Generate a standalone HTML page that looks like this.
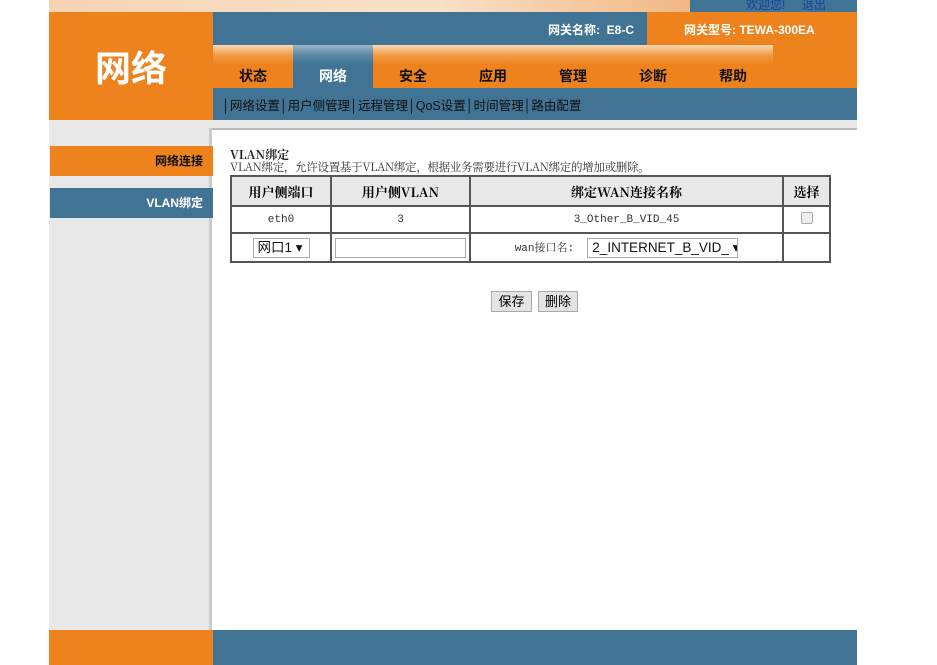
<!DOCTYPE html>
<html><head><meta charset="utf-8"><style>
*{margin:0;padding:0;box-sizing:border-box}
body{width:937px;height:665px;background:#fff;position:relative;overflow:hidden;font-family:"Liberation Sans","Noto Sans CJK SC",sans-serif;font-size:12px}
.a{position:absolute}
.or{background:#ee821c}
.bl{background:#417494}
.tab{position:absolute;top:45px;width:80px;height:43px;text-align:center;padding-top:21px;font-size:14px;font-weight:bold;color:#111;background:linear-gradient(#f9d9b3 0,#f29a45 10px,#ee821c 20px)}
.tab.on{background:linear-gradient(#9bb6c9 0,#5a87a5 10px,#417494 20px);color:#fff}
table{border-collapse:collapse;position:absolute;left:230px;top:175px;width:599px;table-layout:fixed}
td{border:2px solid #555;text-align:center;font-size:11px;font-family:"Liberation Mono","Noto Serif CJK SC",monospace;color:#333;white-space:nowrap;padding:0}
th{border:2px solid #555;background:#e8e8e8;font-size:13px;font-family:"Noto Serif CJK SC",serif;height:30px}
.btn{position:absolute;top:291px;height:21px;border:1px solid #aaa;background:#e4e4e4;font-size:13px;text-align:center;line-height:19px}
.sel{display:inline-block;vertical-align:middle;border:1px solid #aaa;background:#fff;font-size:13.5px;line-height:18px;height:20px;text-align:left;padding-left:4px;font-family:"Liberation Sans","Noto Sans CJK SC",sans-serif;color:#111;white-space:nowrap;overflow:hidden}
</style></head><body>
<div class="a" style="left:49px;top:0;width:641px;height:12px;background:linear-gradient(90deg,#f6d4b4,#f9e1c8 60%,#f2b884)"></div>
<div class="a bl" style="left:690px;top:0;width:167px;height:12px"></div>
<div class="a" style="left:746px;top:-4px;color:#1a3fa0;font-size:12px">欢迎您!&nbsp;&nbsp;&nbsp;&nbsp;&nbsp;退出</div>
<div class="a or" style="left:49px;top:12px;width:164px;height:108px"></div>
<div class="a" style="left:49px;top:40px;width:164px;text-align:center;color:#fff;font-size:36px;font-weight:bold">网络</div>
<div class="a bl" style="left:213px;top:12px;width:434px;height:33px"></div>
<div class="a or" style="left:647px;top:12px;width:210px;height:33px"></div>
<div class="a" style="left:548px;top:21px;color:#fff;font-weight:bold;font-size:12px">网关名称:&nbsp; E8-C</div>
<div class="a" style="left:684px;top:21px;color:#fff;font-weight:bold;font-size:12px">网关型号: TEWA-300EA</div>
<div class="a or" style="left:773px;top:45px;width:84px;height:43px"></div>
<div class="tab" style="left:213px">状态</div>
<div class="tab on" style="left:293px">网络</div>
<div class="tab" style="left:373px">安全</div>
<div class="tab" style="left:453px">应用</div>
<div class="tab" style="left:533px">管理</div>
<div class="tab" style="left:613px">诊断</div>
<div class="tab" style="left:693px">帮助</div>
<div class="a bl" style="left:213px;top:88px;width:644px;height:32px"></div>
<div class="a" style="left:222px;top:95px;color:#111;font-size:12.5px;white-space:nowrap">│网络设置│用户侧管理│远程管理│QoS设置│时间管理│路由配置</div>
<div class="a" style="left:49px;top:120px;width:808px;height:10px;background:#e8e8e8"></div>
<div class="a" style="left:209px;top:128px;width:648px;height:2px;background:#bbb"></div>
<div class="a" style="left:49px;top:120px;width:160px;height:510px;background:#e8e8e8"></div>
<div class="a" style="left:209px;top:128px;width:3px;height:502px;background:#ccc"></div>
<div class="a or" style="left:50px;top:146px;width:163px;height:30px;text-align:right;padding:6px 10px 0 0;font-weight:bold;color:#111">网络连接</div>
<div class="a bl" style="left:50px;top:188px;width:163px;height:30px;text-align:right;padding:6px 10px 0 0;font-weight:bold;color:#fff">VLAN绑定</div>
<div class="a" style="left:230px;top:146px;font-size:12px;font-weight:bold;font-family:'Noto Serif CJK SC',serif;color:#222">VLAN绑定</div>
<div class="a" style="left:230px;top:159px;font-size:11.5px;font-family:'Noto Serif CJK SC',serif;color:#333;white-space:nowrap;letter-spacing:-0.3px">VLAN绑定，允许设置基于VLAN绑定，根据业务需要进行VLAN绑定的增加或删除。</div>
<table>
<colgroup><col style="width:100px"><col style="width:139px"><col style="width:313px"><col style="width:47px"></colgroup>
<tr><th>用户侧端口</th><th>用户侧VLAN</th><th>绑定WAN连接名称</th><th>选择</th></tr>
<tr style="height:27px"><td>eth0</td><td>3</td><td>3_Other_B_VID_45</td><td><span style="display:inline-block;width:12px;height:12px;border:1px solid #aaa;border-radius:2px;background:#eee"></span></td></tr>
<tr style="height:29px"><td><span class="sel" style="width:57px">网口1 ▾</span></td><td><span class="sel" style="width:131px"></span></td><td>wan接口名: &nbsp;<span class="sel" style="width:151px">2_INTERNET_B_VID_ ▾</span></td><td></td></tr>
</table>
<div class="btn" style="left:491px;width:41px">保存</div>
<div class="btn" style="left:538px;width:40px">删除</div>
<div class="a or" style="left:49px;top:630px;width:164px;height:35px"></div>
<div class="a bl" style="left:213px;top:630px;width:644px;height:35px"></div>
</body></html>
